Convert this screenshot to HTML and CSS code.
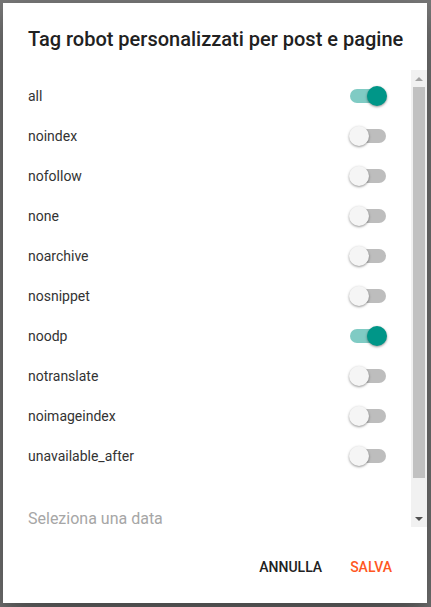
FILE: index.html
```html
<!DOCTYPE html>
<html>
<head>
<meta charset="utf-8">
<link rel="stylesheet" href="styles.css">
</head>
<body>
<div class="backdrop">
  <div class="dialog">
    <h3 class="title">Tag robot personalizzati per post e pagine</h3>
    <div class="scrollwrap">
      <div class="body">
        <div class="row"><span class="label">all</span><span class="toggle on"><span class="track"></span><span class="thumb"></span></span></div>
        <div class="row"><span class="label">noindex</span><span class="toggle"><span class="track"></span><span class="thumb"></span></span></div>
        <div class="row"><span class="label">nofollow</span><span class="toggle"><span class="track"></span><span class="thumb"></span></span></div>
        <div class="row"><span class="label">none</span><span class="toggle"><span class="track"></span><span class="thumb"></span></span></div>
        <div class="row"><span class="label">noarchive</span><span class="toggle"><span class="track"></span><span class="thumb"></span></span></div>
        <div class="row"><span class="label">nosnippet</span><span class="toggle"><span class="track"></span><span class="thumb"></span></span></div>
        <div class="row"><span class="label">noodp</span><span class="toggle on"><span class="track"></span><span class="thumb"></span></span></div>
        <div class="row"><span class="label">notranslate</span><span class="toggle"><span class="track"></span><span class="thumb"></span></span></div>
        <div class="row"><span class="label">noimageindex</span><span class="toggle"><span class="track"></span><span class="thumb"></span></span></div>
        <div class="row"><span class="label">unavailable_after</span><span class="toggle"><span class="track"></span><span class="thumb"></span></span></div>
        <div class="field"><span class="hint">Seleziona una data</span></div>
      </div>
      <div class="scrollbar">
        <div class="sb-btn"><span class="arrow-up"></span></div>
        <div class="sb-track"><div class="sb-thumb"></div></div>
        <div class="sb-btn"><span class="arrow-down"></span></div>
      </div>
    </div>
    <div class="actions">
      <button class="btn">Annulla</button>
      <button class="btn primary">Salva</button>
    </div>
  </div>
</div>
</body>
</html>
```
FILE: styles.css
```css
html, body {
  margin: 0;
  padding: 0;
  height: 100%;
}
body {
  background: #7a7a7a;
  font-family: Roboto, "Liberation Sans", sans-serif;
}
.backdrop {
  padding: 3px;
}
.dialog {
  width: 424px;
  height: 600px;
  background: #fff;
  box-shadow: 0 19px 60px rgba(0,0,0,0.3), 0 15px 20px rgba(0,0,0,0.22);
  display: flex;
  flex-direction: column;
}
.title {
  margin: 0;
  padding: 24px 0 19px 25px;
  font-size: 20px;
  line-height: 24px;
  font-weight: 500;
  color: #212121;
  white-space: nowrap;
  flex-shrink: 0;
}
.scrollwrap {
  flex: 0 0 457px;
  height: 457px;
  display: flex;
}
.body {
  flex: 1;
  overflow: hidden;
  padding: 6px 0 0 25px;
}
.scrollbar {
  width: 16px;
  background: #f1f1f1;
  display: flex;
  flex-direction: column;
}
.sb-btn {
  height: 17px;
  display: flex;
  align-items: center;
  justify-content: center;
}
.arrow-up {
  width: 0;
  height: 0;
  border-left: 4px solid transparent;
  border-right: 4px solid transparent;
  border-bottom: 4px solid #a3a3a3;
}
.arrow-down {
  width: 0;
  height: 0;
  border-left: 4px solid transparent;
  border-right: 4px solid transparent;
  border-top: 4px solid #505050;
}
.sb-track {
  flex: 1;
  padding: 0 2px;
}
.sb-thumb {
  height: 391px;
  background: #c1c1c1;
}
.row {
  height: 40px;
  display: flex;
  align-items: center;
  justify-content: space-between;
  padding-right: 24px;
}
.label {
  font-size: 14px;
  color: #333;
}
.toggle {
  position: relative;
  width: 38px;
  height: 20px;
}
.track {
  position: absolute;
  left: 1px;
  top: 3px;
  width: 36px;
  height: 14px;
  border-radius: 7px;
  background: #bdbdbd;
}
.thumb {
  position: absolute;
  left: 0;
  top: 0;
  width: 20px;
  height: 20px;
  border-radius: 50%;
  background: #f5f5f5;
  box-shadow: 0 1px 3px rgba(0,0,0,0.25), 0 1px 2px rgba(0,0,0,0.2);
}
.toggle.on .track {
  background: #80cbc4;
}
.toggle.on .thumb {
  left: 18px;
  background: #009688;
}
.field {
  position: relative;
  height: 72px;
  margin-right: 24px;
}
.hint {
  position: absolute;
  left: 0;
  top: 35px;
  font-size: 16px;
  color: #a6a6a6;
  line-height: 16px;
}
.actions {
  flex: 1;
  display: flex;
  justify-content: flex-end;
  align-items: flex-start;
  padding: 22px 23px 0 0;
  gap: 4px;
}
.btn {
  border: none;
  background: transparent;
  font-family: Roboto, "Liberation Sans", sans-serif;
  font-size: 14px;
  font-weight: 500;
  text-transform: uppercase;
  color: #212121;
  height: 36px;
  padding: 0 12px;
  min-width: 64px;
}
.btn.primary {
  color: #ff5722;
}
```
